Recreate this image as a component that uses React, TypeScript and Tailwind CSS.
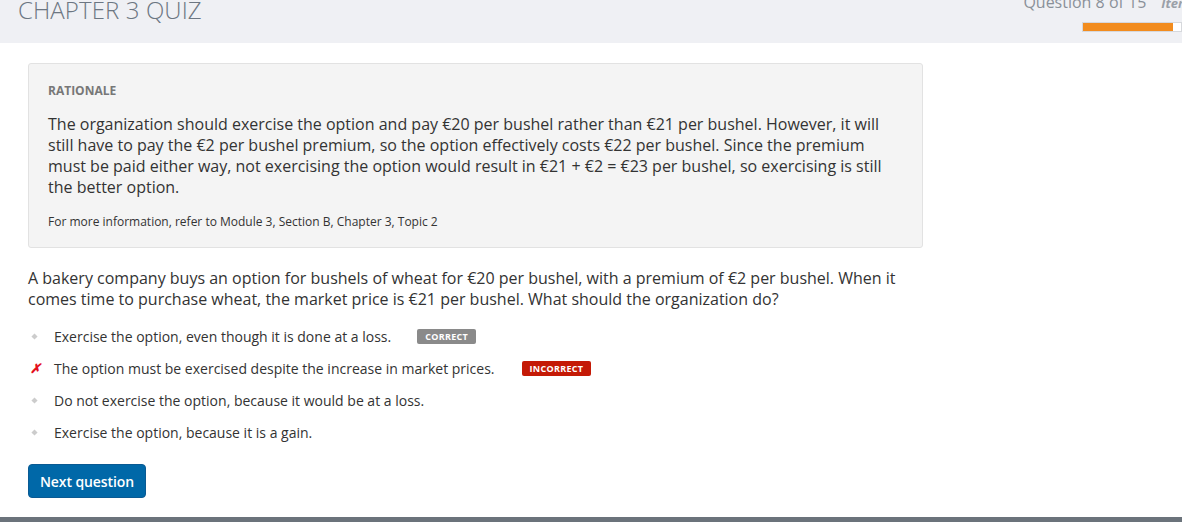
const options = [
  { text: 'Exercise the option, even though it is done at a loss.', badge: 'correct' },
  { text: 'The option must be exercised despite the increase in market prices.', badge: 'incorrect' },
  { text: 'Do not exercise the option, because it would be at a loss.' },
  { text: 'Exercise the option, because it is a gain.' },
];

const Diamond = () => (
  <svg width="7" height="7" viewBox="0 0 8 8" className="text-[#cccccc]">
    <path d="M4 0.5 L7.5 4 L4 7.5 L0.5 4 Z" fill="currentColor" />
  </svg>
);

const Cross = () => (
  <span className="text-[13px] font-bold italic leading-none text-[#e4111c]">✗</span>
);

export default function App() {
  return (
    <div className="flex h-[522px] w-[1182px] flex-col overflow-hidden bg-white font-['Open_Sans',sans-serif] text-[#333]">
      <header className="flex h-[43px] shrink-0 items-start justify-between overflow-hidden bg-[#eff0f4]">
        <h1 className="-mt-[6px] ml-[18px] text-[24px] font-light leading-[32px] tracking-[0.1px] text-[#6c7682]">
          CHAPTER 3 QUIZ
        </h1>
        <div className="flex flex-col items-end">
          <div className="-mt-[9px] flex items-baseline gap-[15px] leading-[22px]">
            <span className="text-[16px] text-[#8a9099]">Question 8 of 15</span>
            <span className="-mr-[14px] text-[13px] font-bold italic text-[#9aa0a8]">Items</span>
          </div>
          <div className="mt-[8px] h-[10px] w-[100px] border border-[#d6d8dc] bg-white">
            <div className="h-full w-[90px] bg-[#f28c1e]" />
          </div>
        </div>
      </header>

      <main className="flex flex-1 flex-col px-[28px] pt-[20px]">
        <section className="w-[895px] rounded-[3px] border border-[#e2e2e2] bg-[#f4f4f4] px-[19px] pt-[18px] pb-[16px]">
          <h2 className="text-[12px] font-bold leading-[18px] text-[#777]">RATIONALE</h2>
          <p className="mt-[14px] w-[840px] text-[16px] leading-[21px] text-[#333]">
            The organization should exercise the option and pay €20 per bushel rather than €21 per bushel. However, it will
            still have to pay the €2 per bushel premium, so the option effectively costs €22 per bushel. Since the premium
            must be paid either way, not exercising the option would result in €21 + €2 = €23 per bushel, so exercising is still
            the better option.
          </p>
          <p className="mt-[15px] text-[12px] leading-[18px] text-[#333]">
            For more information, refer to Module 3, Section B, Chapter 3, Topic 2
          </p>
        </section>

        <p className="mt-[20px] w-[880px] text-[16px] leading-[21px] text-[#333]">
          A bakery company buys an option for bushels of wheat for €20 per bushel, with a premium of €2 per bushel. When it
          comes time to purchase wheat, the market price is €21 per bushel. What should the organization do?
        </p>

        <ul className="mt-[16px] flex flex-col gap-[12px]">
          {options.map((o) => (
            <li key={o.text} className="flex h-[20px] items-center text-[14px] text-[#333]">
              <span className="flex w-[26px] justify-start pl-[2px]">
                {o.badge === 'incorrect' ? <Cross /> : <span className="ml-[1px]"><Diamond /></span>}
              </span>
              <span>{o.text}</span>
              {o.badge === 'correct' && (
                <span className="ml-[26px] rounded-[2px] bg-[#8a8a8a] px-[8px] text-[9px] font-bold leading-[15px] tracking-[0.3px] text-white">
                  CORRECT
                </span>
              )}
              {o.badge === 'incorrect' && (
                <span className="ml-[27px] rounded-[2px] bg-[#c41a06] px-[8px] text-[9px] font-bold leading-[15px] tracking-[0.3px] text-white">
                  INCORRECT
                </span>
              )}
            </li>
          ))}
        </ul>

        <div className="mt-[22px]">
          <button className="h-[34px] rounded-[4px] border border-[#0a5a93] bg-[#0068a8] px-[11px] text-[14px] font-semibold tracking-[-0.1px] text-white">
            Next question
          </button>
        </div>
      </main>

      <div className="h-[5px] shrink-0 bg-[#6b737b]" />
    </div>
  );
}
